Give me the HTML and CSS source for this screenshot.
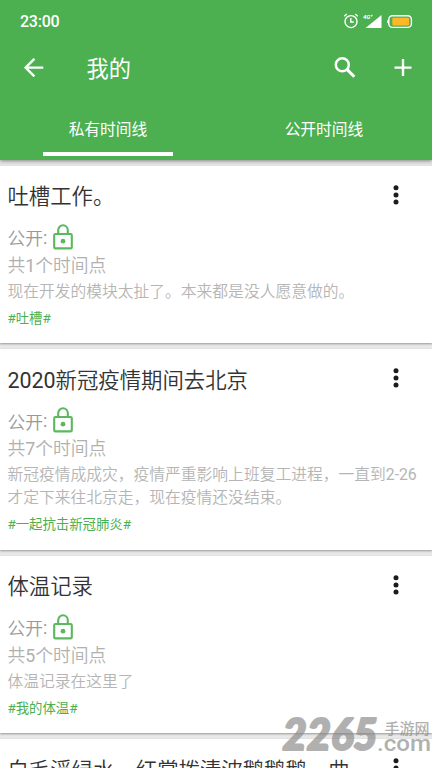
FILE: index.html
```html
<!DOCTYPE html>
<html lang="zh-CN">
<head>
<meta charset="utf-8">
<title>我的</title>
<link rel="stylesheet" href="styles.css">
</head>
<body>
<svg class="defs" width="0" height="0">
  <symbol id="lock" viewBox="0 0 20 26"><path d="M5.2 10V6.3a4.8 5 0 0 1 9.6 0V10" fill="none" stroke="currentColor" stroke-width="2.1"/><rect x="1.2" y="10" width="17.6" height="14.4" rx="1.2" fill="none" stroke="currentColor" stroke-width="2.1"/><circle cx="10" cy="17.2" r="2.4" fill="currentColor"/></symbol>
  <symbol id="more" viewBox="0 0 6 20"><circle cx="3" cy="2.7" r="2.5"/><circle cx="3" cy="9.9" r="2.5"/><circle cx="3" cy="17.1" r="2.5"/></symbol>
</svg>
<div class="screen">
  <header class="header">
    <div class="status">
      <span class="clock">23:00</span>
      <svg class="status-icons" width="72" height="18" viewBox="0 0 72 18">
        <g fill="none" stroke="#fff" stroke-width="1.4"><circle cx="8" cy="9.6" r="6"/><path d="M7.8 6v4h3M1.2 4.2 3.8 2M12.2 2l2.6 2.2"/></g>
        <text class="net" x="20" y="6.6">4G⁺</text>
        <path d="M22.5 16H38.5V3z" fill="#fff"/>
        <rect x="45.8" y="3.8" width="22.6" height="11.6" rx="3.6" fill="none" stroke="#fff" stroke-width="1.4"/>
        <path d="M45.6 7.5 44.2 8.4v2.4l1.4.9z" fill="#fff"/>
        <rect x="49.3" y="5.8" width="16.8" height="7.8" rx="1" fill="#fcb826"/>
      </svg>
    </div>
    <div class="toolbar">
      <svg class="back" width="20" height="20" viewBox="0 0 20 20"><path d="M19.3 9.6H1.8M10.4.8 1.6 9.6l8.8 8.8" fill="none" stroke="#fff" stroke-width="2.4"/></svg>
      <h1 class="app-title">我的</h1>
      <svg class="search" width="22" height="22" viewBox="0 0 22 22"><g fill="none" stroke="#fff"><circle cx="8.3" cy="7.8" r="6.5" stroke-width="2.5"/><path d="m13 12.4 7.3 7.3" stroke-width="3"/></g></svg>
      <svg class="add" width="18" height="18" viewBox="0 0 18 18"><path d="M.5 8.6h17M9 .1v17" stroke="#fff" stroke-width="2.4"/></svg>
    </div>
    <nav class="tabs">
      <div class="tab active">私有时间线</div>
      <div class="tab">公开时间线</div>
    </nav>
  </header>
  <main class="list">
    <article class="card">
      <div class="card-head"><h2>吐槽工作。</h2><svg class="more"><use href="#more"/></svg></div>
      <div class="access">公开<span class="latin">:</span><svg class="lock"><use href="#lock"/></svg></div>
      <div class="count">共<span class="latin">1</span>个时间点</div>
      <p class="desc">现在开发的模块太扯了。本来都是没人愿意做的。</p>
      <div class="tag">#吐槽#</div>
    </article>
    <article class="card">
      <div class="card-head"><h2><span class="latin">2020</span>新冠疫情期间去北京</h2><svg class="more"><use href="#more"/></svg></div>
      <div class="access">公开<span class="latin">:</span><svg class="lock"><use href="#lock"/></svg></div>
      <div class="count">共<span class="latin">7</span>个时间点</div>
      <p class="desc">新冠疫情成成灾，疫情严重影响上班复工进程，一直到<span class="latin">2-26</span><br>才定下来往北京走，现在疫情还没结束。</p>
      <div class="tag">#一起抗击新冠肺炎#</div>
    </article>
    <article class="card">
      <div class="card-head"><h2>体温记录</h2><svg class="more"><use href="#more"/></svg></div>
      <div class="access">公开<span class="latin">:</span><svg class="lock"><use href="#lock"/></svg></div>
      <div class="count">共<span class="latin">5</span>个时间点</div>
      <p class="desc">体温记录在这里了</p>
      <div class="tag">#我的体温#</div>
    </article>
    <article class="card">
      <div class="card-head"><h2>白毛浮绿水，红掌拨清波鹅鹅鹅，曲</h2><svg class="more"><use href="#more"/></svg></div>
    </article>
  </main>
  <svg class="watermark" width="162" height="48" viewBox="0 0 162 48">
    <text class="wm-num" x="12.5" y="39" textLength="95" lengthAdjust="spacingAndGlyphs">2265</text>
    <text class="wm-cn" x="114.5" y="23" textLength="45" lengthAdjust="spacingAndGlyphs">手游网</text>
    <text class="wm-com" x="107" y="39.5" textLength="54" lengthAdjust="spacingAndGlyphs">.com</text>
  </svg>
</div>
</body>
</html>
```
FILE: styles.css
```css
* { box-sizing: border-box; }
body { margin: 0; background: #e8e8e8; font-family: Roboto, "Noto Sans CJK SC", sans-serif; }
h1, h2, p { margin: 0; font-weight: 400; }
.defs { position: absolute; }
.screen { position: relative; width: 432px; height: 768px; overflow: hidden; background: #e8e8e8; }
.header { position: relative; height: 160px; background: #4caf50; color: #fff; box-shadow: 0 1px 4px rgba(0,0,0,.45); }
.status { display: flex; justify-content: space-between; height: 43px; padding: 12px 17px 0 20px; }
.clock { font-size: 16px; line-height: 20px; font-weight: 500; letter-spacing: -.25px; }
.net { font: italic 700 6px Roboto, sans-serif; fill: #fff; }
.toolbar { display: flex; align-items: center; height: 49px; padding: 0 20px 0 24px; }
.app-title { flex: 1; margin: 2px 0 0 42.5px; font-size: 22.2px; line-height: 32px; font-weight: 400; }
.search { margin-right: 38px; }
.tabs { display: flex; height: 64px; justify-content: space-around; }
.tab { width: 130px; height: 64px; padding-top: 26px; line-height: 24px; text-align: center; font-size: 15.75px; font-weight: 400; }
.active { border-bottom: 4px solid #fff; }
.list { display: flex; flex-direction: column; gap: 6px; padding-top: 5.6px; }
.card { flex: none; min-height: 177.5px; padding: 15.6px 8px 14.2px 7.4px; background: #fff; box-shadow: 0 1px 2px rgba(0,0,0,.35); }
.card-head { display: flex; justify-content: space-between; height: 40px; }
.latin { font-weight: 400; }
h2 { font-size: 21.4px; line-height: 32px; color: #333; font-weight: 350; white-space: nowrap; }
.more { width: 6px; height: 20px; margin: 3.6px 25px 0 0; fill: #1c1c1c; }
.access { display: flex; align-items: center; height: 32.4px; font-size: 17.8px; color: #999; font-weight: 350; }
.lock { width: 20px; height: 26px; margin: -1.4px 0 0 6px; color: #5bb85f; }
.count { height: 24px; font-size: 17.8px; line-height: 24.6px; color: #b0b0b0; font-weight: 350; }
.desc { font-size: 15.77px; line-height: 23px; padding-top: 2px; color: #b5b5b5; font-weight: 350; white-space: nowrap; }
.tag { margin-top: 6.3px; font-size: 13.4px; line-height: 20px; color: #4caf50; }
.watermark { position: absolute; left: 270px; top: 711px; opacity: .66; fill: #888; }
.wm-num { font: italic 900 43px Lato, sans-serif; stroke: #888; stroke-width: 2.2px; stroke-linejoin: round; }
.wm-cn { font: 500 15px "Noto Sans CJK SC", sans-serif; }
.wm-com { font: 500 22px Roboto, sans-serif; }
```
